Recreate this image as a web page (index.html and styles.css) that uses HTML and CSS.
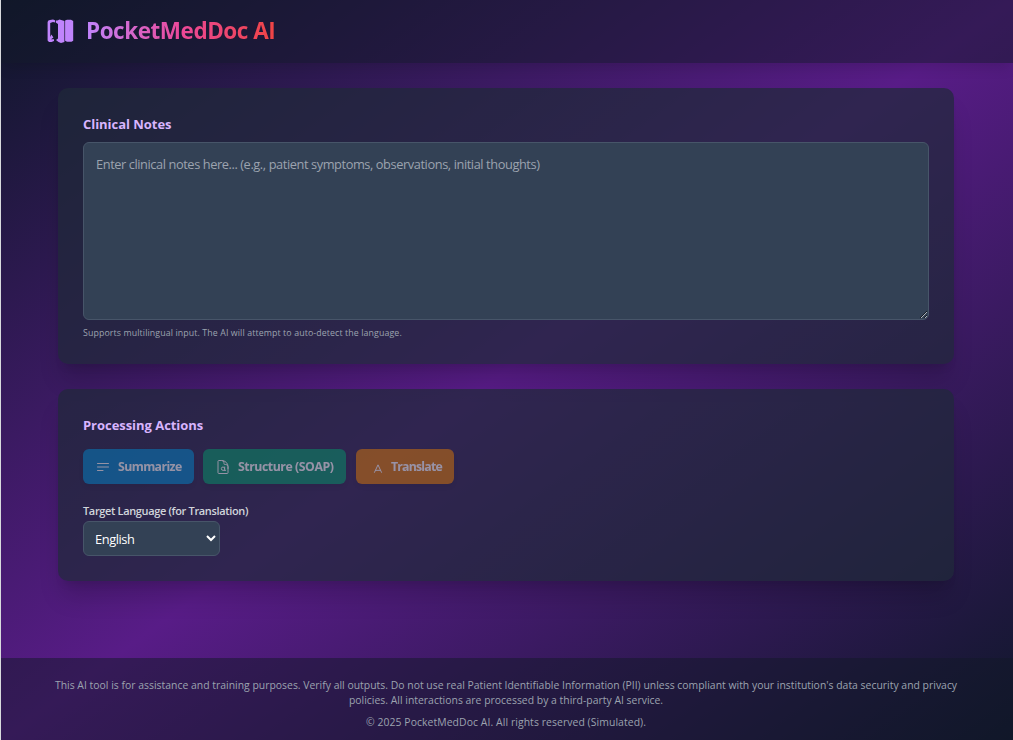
FILE: index.html
```html
<!DOCTYPE html>
<html lang="en">
<head>
<meta charset="utf-8">
<title>PocketMedDoc AI</title>
<link rel="stylesheet" href="styles.css">
</head>
<body>
<div class="app">
  <header class="header">
    <svg class="logo" viewBox="0 0 30 28" fill="#c084fc"><path fill-rule="evenodd" d="M1.6 5Q2 3 4 3L7 2.4L9 3.2V5.5L7 5L4.2 6V20L5.4 17.4L7.4 20.5L5 22.2H8V24L5.5 25L3 25L1.6 23.5ZM9.8 3.6L11.4 3.4L13.5 2.6L16 3.2L18.4 4V25L15 26L12.5 25L10 23L12 21.5V7L9.8 5.5ZM19.1 3.6L21 2.8H25L27.2 4V23.8L25.5 24.8H21L19.1 23.8Z"/></svg>
    <h1 class="title"><span class="title-text">PocketMedDoc AI</span></h1>
  </header>
  <main class="main">
    <section class="card notes">
      <h2 class="heading">Clinical Notes</h2>
      <textarea class="notes-input" placeholder="Enter clinical notes here... (e.g., patient symptoms, observations, initial thoughts)"></textarea>
      <p class="hint"><span>Supports multilingual input. The AI will attempt to auto-detect the language.</span></p>
    </section>
    <section class="card actions">
      <h2 class="heading">Processing Actions</h2>
      <div class="buttons">
        <button class="btn summarize" disabled><svg class="icon" viewBox="0 0 24 24"><path d="M3.75 6.75h16.5M3.75 12h16.5M3.75 17.25h8.25"/></svg><span>Summarize</span></button>
        <button class="btn structure" disabled><svg class="icon" viewBox="0 0 24 24"><path d="M19.5 14.25v-2.625a3.375 3.375 0 0 0-3.375-3.375h-1.5A1.125 1.125 0 0 1 13.5 7.125v-1.5a3.375 3.375 0 0 0-3.375-3.375H5.625c-.621 0-1.125.504-1.125 1.125v17.25c0 .621.504 1.125 1.125 1.125h12.75c.621 0 1.125-.504 1.125-1.125V11.25a9 9 0 0 0-9-9M14.5 12V17H16M14.5 14.5a2.5 2.5 0 1 0-2.5 2.5H14.5"/></svg><span>Structure (SOAP)</span></button>
        <button class="btn translate" disabled><svg class="icon" viewBox="0 0 24 24"><path d="M9.75 20l5.25-11.25L20.25 20m-9-3h7.5"/></svg><span>Translate</span></button>
      </div>
      <label class="label" for="lang"><span>Target Language (for Translation)</span></label>
      <select class="select" id="lang"><option>English</option></select>
    </section>
  </main>
  <footer class="footer">
    <p class="disclaimer"><span>This AI tool is for assistance and training purposes. Verify all outputs. Do not use real Patient Identifiable Information (PII) unless compliant with your institution's data security and privacy</span><br><span>policies. All interactions are processed by a third-party AI service.</span></p>
    <p class="copyright">© 2025 PocketMedDoc AI. All rights reserved (Simulated).</p>
  </footer>
</div>
</body>
</html>
```
FILE: styles.css
```css
* { box-sizing: border-box; margin: 0; padding: 0; }
body { font-family: "Open Sans", "Noto Sans", sans-serif; background: #d8dadd; color: #f1f5f9; }
.app { height: 740px; margin-left: 1px; display: flex; flex-direction: column; background: linear-gradient(to bottom right, #0f172a, #581c87, #0f172a); overflow: hidden; }
.header { height: 63px; flex: none; display: flex; align-items: center; padding: 0 0 1px 45px; background: rgba(17, 24, 39, .5); box-shadow: 0 8px 12px -3px rgba(0,0,0,.12); }
.logo { width: 30px; height: 28px; flex: none; }
.title { font-size: 22.5px; line-height: 32px; font-weight: 700; letter-spacing: -.47px; margin-left: 10px; }
.title-text { color: transparent; background: linear-gradient(to right, #c084fc, #ec4899, #ef4444); -webkit-background-clip: text; background-clip: text; }
.main { flex: 1; padding: 25px 59px 0 57px; display: flex; flex-direction: column; gap: 25px; }
.card { background: rgba(31, 41, 57, .7); border-radius: 10px; padding: 25px; box-shadow: 0 20px 25px -5px rgba(0,0,0,.16), 0 8px 10px -6px rgba(0,0,0,.1); }
.notes { height: 276px; }
.actions { height: 192px; }
.heading { font-size: 13px; line-height: 22px; font-weight: 700; letter-spacing: -.04px; color: #d8b4fe; }
.notes-input { display: block; width: 100%; height: 178px; margin-top: 7px; padding: 11px 12px; border: 1px solid #475569; border-radius: 6px; background: #334155; color: #f1f5f9; font: 12.8px/20px "Open Sans", sans-serif; letter-spacing: -.415px; resize: vertical; }
.notes-input::placeholder { color: #9ca3af; }
.hint { font-size: 8.8px; line-height: 14px; margin-top: 6px; letter-spacing: .11px; color: #9ca3af; }
.buttons { display: flex; gap: 9px; margin-top: 13px; }
.btn { height: 35px; border: 0; border-radius: 6px; display: flex; align-items: center; gap: 7px; padding-left: 12px; font: 700 12.3px/20px "Open Sans", sans-serif; letter-spacing: -.6px; color: #fff; opacity: .5; white-space: nowrap; box-shadow: 0 3px 5px rgba(0,0,0,.1); }
.summarize { width: 111px; background: #0284c7; }
.structure { width: 143px; background: #059669; letter-spacing: -.45px; }
.translate { width: 98px; margin-left: 1px; background: #d97706; letter-spacing: -.8px; }
.icon { width: 16px; height: 16px; flex: none; fill: none; stroke: currentColor; stroke-width: 1.5; stroke-linecap: round; stroke-linejoin: round; }
.label { display: block; font-size: 11px; line-height: 18px; margin-top: 18px; font-weight: 600; letter-spacing: -.35px; color: #d1d5db; }
.select { display: block; width: 137px; height: 35px; margin-top: 1px; padding: 0 0 0 7px; border: 1px solid #475569; border-radius: 6px; background: #334155; color: #fff; font: 12.8px "Open Sans", sans-serif; letter-spacing: -.4px; }
.footer { height: 82px; flex: none; padding: 20px 2px 0 0; text-align: center; color: #9ca3af; background: rgba(17, 24, 39, .5); font-size: 10.4px; line-height: 15px; letter-spacing: .014px; white-space: nowrap; }
.copyright { margin-top: 7px; letter-spacing: .08px; }
```
